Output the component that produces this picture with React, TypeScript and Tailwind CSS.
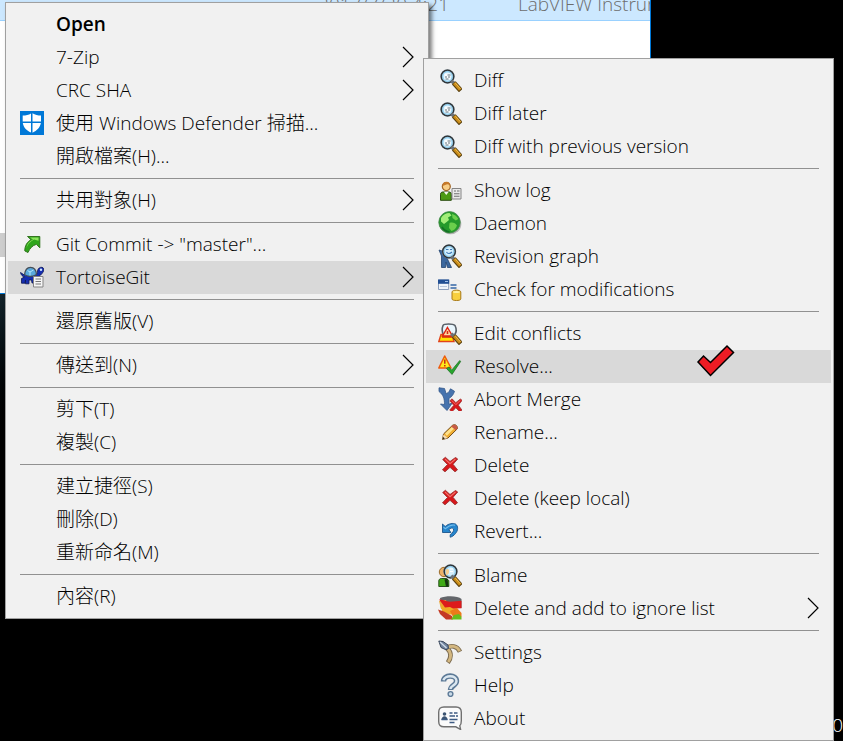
import React from "react"

interface MenuEntry {
  label: string
  icon?: React.ReactNode
  bold?: boolean
  active?: boolean
  submenu?: boolean
  marked?: boolean
}

const Icon = ({ children }: { children?: React.ReactNode }) => (
  <svg viewBox="0 0 24 24" className="size-6" aria-hidden="true">
    {children}
  </svg>
)

const Handle = () => (
  <>
    <path d="M13.2 12.8l3.3 2.8" stroke="#6c7278" strokeWidth="3.4" />
    <path d="M15.8 14.8l7 7.8" stroke="#59400f" strokeWidth="5" />
    <path d="M16.2 15l6 6.8" stroke="#c98b18" strokeWidth="3.2" />
    <path d="M17.4 15.2l5 5.6" stroke="#eebc50" strokeWidth="1" />
  </>
)

const Lens = ({ cx = 9.5, cy = 8.5 }: { cx?: number; cy?: number }) => (
  <>
    <circle cx={cx} cy={cy} r="6" fill="#d5effc" stroke="#8b969e" strokeWidth="2.4" />
    <circle cx={cx} cy={cy} r="6.3" fill="none" stroke="#2d3438" strokeWidth="1.3" />
    <circle cx={cx} cy={cy} r="4.8" fill="none" stroke="#8fd0f2" strokeWidth="1.2" />
  </>
)

const DiffIcon = () => (
  <Icon>
    <Lens />
    <rect x="6.5" y="5.5" width="6" height="6" fill="#fbfdfe" />
    <path d="M9.5 7h3M7 9h2M10 9h2M7.5 11h3" stroke="#62727c" strokeWidth="1" />
    <Handle />
  </Icon>
)

const DefenderIcon = () => (
  <Icon>
    <rect width="24" height="24" fill="#0078d7" />
    <path
      d="M11 2.5C8.7 4 6 4.6 2.7 4.6v5.9H11zM12.5 2.3c2.5 1.7 5.500 2.300 8.500 2.300v5.900h-8.500zM2.8 12H11v9.600C6.500 19.500 3.500 16.500 2.800 12zM12.500 12h8.400c-.8 4.500-3.900 7.500-8.400 9.700z"
      fill="#fff"
    />
  </Icon>
)

const CommitIcon = () => (
  <Icon>
    <path
      d="M7.500 4.500h12.300v11.300l-3.400-3.500c-4 1.200-6.600 4-8.400 8.200l-3.200-1.600C4.700 13.500 7.500 9.500 11 7.700z"
      fill="#2fa51c"
      stroke="#33751f"
    />
    <path d="M10 5.500h8.500v3.300L14 7.500c-4 2-6.500 5-7.500 8.500.3-4 2.800-7 6.500-8.600z" fill="#8de35c" />
  </Icon>
)

const TortoiseIcon = () => (
  <Icon>
    <path
      d="M.5 7.500L4 9.800l3-.6 8 .8c2-.5 2.500-2 2.500-4C18 3.200 20 2 22 2.300c1.800.4 2.200 2.500 1.500 4C22 9.300 19.500 11 17 13l-.5 5H12l-.5-3H9v3.800H5.500V15L5 18.200H1.500V13.500L4.500 12C2.500 11.500 1 10 .5 7.500z"
      fill="#152db0"
      stroke="#0c1656"
      strokeWidth=".8"
    />
    <path
      d="M4.500 9.800C5 5 7.500 2.300 10.500 2.300c3.700 0 5.700 3 6 7.200-3.500 2.300-8.500 2.300-12 .3z"
      fill="#5aa9dc"
      stroke="#464e58"
      strokeWidth="1.300"
    />
    <path d="M7.500 5.500L10 7l3.500-2M10 7v3.500" stroke="#b5e5fa" fill="none" />
    <circle cx="21" cy="4.700" r="1.200" fill="#cfe6ff" />
    <path d="M13.500 11.500H23V22h-9.500z" fill="#f6f6f6" stroke="#858585" />
    <path d="M15.500 14h5.500M15.500 16.500h5.500M15.500 19h5.500" stroke="#777" strokeWidth="1.200" />
  </Icon>
)

const LogIcon = () => (
  <Icon>
    <path d="M2.500 22.300v-6c0-1.500 1-2.300 2.500-2.300h6c1.500 0 2.300.8 2.300 2.300v6z" fill="#4c9a14" stroke="#2a4c10" />
    <path d="M6 14l2.300 3 2.300-3z" fill="#f5f8f0" />
    <circle cx="8.300" cy="8.600" r="4" fill="#f8cf88" stroke="#a06424" strokeWidth="1.200" />
    <path d="M4.500 8c0-3 2-4.500 4.300-4.300 2 .1 3.300 1.500 3.400 3.300-2-1.200-3.500-1-5 0z" fill="#c67a2b" />
    <path d="M14 10.500h9V21h-9z" fill="#e9e9e9" stroke="#858585" />
    <path d="M16 13h2M19 13h2.500M16 15.700h5.500M16 18.300h5.500" stroke="#707070" strokeWidth="1.100" />
  </Icon>
)

const GlobeIcon = () => (
  <Icon>
    <ellipse cx="12.500" cy="13" rx="10.800" ry="10.300" fill="#000" opacity=".25" />
    <circle cx="11.500" cy="11.300" r="10.700" fill="#259a2b" stroke="#45884a" strokeWidth=".8" />
    <path d="M3 7c2-3.500 5-5 8.500-5l2 2.500-3.500 2 1 2.500-3 2.500L6 13 3 10.500z" fill="#a3ed79" />
    <path d="M14 3c3 .5 5 2.500 6.300 5l-2.500 1.500L14.500 7zM11.500 12c3-1 6 0 7.500 2.500-1 3-3 5-5.500 5.500L11 17z" fill="#6bcf4c" />
    <path d="M4 16c2 3.500 5 4.500 7.500 5" stroke="#147126" strokeWidth="1.600" fill="none" />
  </Icon>
)

const GraphIcon = () => (
  <Icon>
    <path d="M1 6l5 1.500L9 14l4.500 9.500h-4L8 18l-.5 5.500H3.500V12z" fill="#3c689e" stroke="#23446f" strokeWidth=".8" />
    <Lens cx={11} cy={7.5} />
    <path d="M8 5.500h2.500M12 5.500h2M8.500 8c1 2 3.500 2 5.500 0" stroke="#3e78b5" strokeWidth="1.100" fill="none" />
    <Handle />
  </Icon>
)

const CheckModsIcon = () => (
  <Icon>
    <path d="M.5 3h10.200v9.500H.5z" fill="#eff4fa" stroke="#8a9dbb" />
    <path d="M0 2.500h11.200v4.300H0z" fill="#214f94" />
    <path d="M7 4.500h3" stroke="#9dbfea" />
    <path d="M2 9.500h7" stroke="#b9c8dd" />
    <path d="M12.500 8h6M12.500 11h6" stroke="#3667a6" strokeWidth="1.300" />
    <path d="M14 15c0-2.500 8.800-2.500 8.800 0v7c0 2-8.800 2-8.800 0z" fill="#f8cf3e" stroke="#a87919" />
    <ellipse cx="18.400" cy="15" rx="3.500" ry="1" fill="#fff0a0" />
  </Icon>
)

const EditConflictsIcon = () => (
  <Icon>
    <path
      d="M5 4.500C6 2.500 15 2.500 17 4.500c1.500 3 1.500 7-.5 9.500h-11C4 11 4 7 5 4.500z"
      fill="#e8f5fc"
      stroke="#596068"
      strokeWidth="1.600"
    />
    <path d="M3 13.500h11l2 7H.8z" fill="#ffe100" stroke="#e24318" strokeWidth="1.400" />
    <path d="M9.500 6.500l5 8.500h-10z" fill="#ffd9a0" stroke="#e02313" strokeWidth="1.400" />
    <path d="M4 16h10M9.500 10v3" stroke="#d62514" strokeWidth="1.600" />
    <Handle />
  </Icon>
)

const ResolveIcon = () => (
  <Icon>
    <path d="M6.700 2L13 14H.8z" fill="#ffea1c" stroke="#ee5a0c" strokeWidth="1.500" strokeLinejoin="round" />
    <path d="M6.800 5.500v4.200M6.800 11v1.500" stroke="#c22818" strokeWidth="1.500" />
    <path d="M8.500 14.500l2.500-1.500 2.700 3.200 8-9.600 1 .8-8.700 13z" fill="#27a82c" stroke="#26712b" strokeWidth=".8" />
  </Icon>
)

const CrossShape = () => (
  <>
    <path
      d="M4.700 6.500l2.700-2.200 4.600 4.200 5.500-4 2.200 1.500-4.700 5.300 4.500 5.500-2.500 2-5-4.500-5 4.500-2.500-2 5-5.300z"
      fill="#d7171b"
      stroke="#9a3533"
      strokeWidth=".9"
    />
    <path d="M7 6l5 4.700L17.500 6" stroke="#f47168" strokeWidth="1.100" fill="none" />
  </>
)

const AbortIcon = () => (
  <Icon>
    <path
      d="M1 .8l5.500.7 1.700 5.300c3-1.300 3-2.800 4.300-5l4 2.500c-1 3-2.500 5.500-5.500 7v6l3.500-1.500L9 23.500 2.500 17l4 .5c0-6-1-9.500-5.500-13z"
      fill="#4673ae"
      stroke="#34588a"
      strokeWidth=".8"
    />
    <g transform="translate(8 8) scale(.82 .9)">
      <CrossShape />
    </g>
  </Icon>
)

const RenameIcon = () => (
  <Icon>
    <path d="M4.500 19.500l1-5.500 9-8.700c2.500-1.800 5.500.5 4.800 3.500L10 18z" fill="#f0ae32" stroke="#754c18" />
    <path d="M7 13.500l7.500-7 1.800 1.700-7.500 7.500z" fill="#ffe28c" />
    <path d="M14.500 5.300c2.500-1.800 5.500.5 4.800 3.500l-1.500 1.400-4.700-3.600z" fill="#c85b46" />
    <path d="M4.500 19.500l1-5 4.300 3.500z" fill="#f6dcb2" />
    <path d="M4.500 19.500l.6-2.500 1.800 1.500z" fill="#222" />
  </Icon>
)

const DeleteIcon = () => (
  <Icon>
    <CrossShape />
  </Icon>
)

const RevertIcon = () => (
  <Icon>
    <path
      d="M4.500 5l2.700 2.500C11 4.200 15 4 17.500 5c3 2 2.700 6.500 0 9.500-1.500 2-3.500 3.300-5.300 3.700v-2.500c2.500-1.500 3.800-4 3.300-5.700-.8-1.500-3-1-4.700.7l2.200 2.800H4.500z"
      fill="#2686cd"
      stroke="#1c568d"
      strokeWidth=".9"
    />
    <path d="M5.500 8.300l2 1.400C11 6.500 14 5.500 17 6.300" stroke="#75bdec" strokeWidth="1.100" fill="none" />
  </Icon>
)

const BlameIcon = () => (
  <Icon>
    <path d="M.8 23.500V18c0-1.500 1-2.500 2.500-2.500h5l2.500 2v6z" fill="#3fab16" stroke="#28521a" />
    <path d="M6.500 16.500l3-1 1 8H8z" fill="#163512" />
    <circle cx="6" cy="9" r="4.700" fill="#eeb268" stroke="#9b6c2c" />
    <Lens cx={12.5} cy={8.5} />
    <path d="M7.500 7c3-2.500 4.500 0 3 4l-2.500 1.500z" fill="#f7cf90" />
    <path d="M12 6h3M12 8.500h3" stroke="#fff" />
    <Handle />
  </Icon>
)

const IgnoreIcon = () => (
  <Icon>
    <path d="M2 2C8-.5 20-.5 23.500 3v9H3z" fill="#63666a" />
    <path d="M1 5l7-1 3 11-8-2z" fill="#e9a838" />
    <path d="M3.500 8.500H20L18 18c-4 1.500-10 0-14-2z" fill="#efaa25" />
    <path d="M1 3.500C5 3.500 8 5.500 12 5.800l11.500-1v7.400l-8.500.3-3-1.500-5 .5L4.500 8z" fill="#dc1a1c" />
    <path d="M0 13.500l6 2 8 4.500 1 3.500H8L2 18z" fill="#c43a24" />
    <path d="M12 15l7-3 4.500 5v4H15z" fill="#ec7a1a" />
    <path d="M13 23.500l3-4.500 5-1 2.500 3v2.500z" fill="#68bd1c" />
  </Icon>
)

const SettingsIcon = () => (
  <Icon>
    <path
      d="M8 8c5-2.800 11-2.500 14 3.700M9 8c4.500 4.500 4.500 9.500.8 14.700"
      fill="none"
      stroke="#7d6c50"
      strokeWidth="4.600"
      strokeLinejoin="round"
    />
    <path d="M8 8c5-2.800 11-2.500 13.700 3.200M9 8c4.500 4.500 4.500 9.500 1.200 14" fill="none" stroke="#d3b780" strokeWidth="2.800" />
    <path d="M.8 1l4.200.5L10 5l.5 3.500L8 9.800 3 7.500z" fill="#71849e" stroke="#3a475b" />
    <path d="M2 2l6.500 6" stroke="#cfdcea" strokeWidth="1.300" />
  </Icon>
)

const HelpIcon = () => (
  <Icon>
    <path d="M5.500 8.500C5.500 1.500 18.500 1 18.500 8c0 4.500-6 4.500-6 9" fill="none" stroke="#5d7a97" strokeWidth="5.400" />
    <path d="M5.500 7.300C6.500 2 18.500 1.500 18.500 8c0 4.500-6 4.500-6 8" fill="none" stroke="#dbe7f0" strokeWidth="2.400" />
    <circle cx="12.500" cy="21" r="2.400" fill="#c9dae7" stroke="#5d7a97" strokeWidth="1.400" />
  </Icon>
)

const AboutIcon = () => (
  <Icon>
    <path
      d="M6 1h12c4 0 5.300 1.500 5.300 5.300v8.500c0 3-.6 4.200-1.500 5l.8 3.700-4.800-2.700H6C2.200 20.800.7 19 .7 15.500V6.300C.7 2.500 2.200 1 6 1z"
      fill="#fbfbfb"
      stroke="#707070"
      strokeWidth="1.400"
    />
    <circle cx="6.500" cy="8" r="1.800" fill="#3c5472" />
    <path d="M3.500 14c0-5 6-5 6 0z" fill="#3c5472" />
    <path
      d="M11.500 7h3M16 7h3.500M11.500 10h5.500M18 10h2M3.500 13.500h6M11.500 13.500h8M11.500 16.500h5"
      stroke="#3e5b83"
      strokeWidth="1.400"
    />
  </Icon>
)

// null is a separator
const explorerEntries: (MenuEntry | null)[] = [
  { label: "Open", bold: true },
  { label: "7-Zip", submenu: true },
  { label: "CRC SHA", submenu: true },
  { label: "使用 Windows Defender 掃描...", icon: <DefenderIcon /> },
  { label: "開啟檔案(H)..." },
  null,
  { label: "共用對象(H)", submenu: true },
  null,
  { label: 'Git Commit -> "master"...', icon: <CommitIcon /> },
  { label: "TortoiseGit", icon: <TortoiseIcon />, active: true, submenu: true },
  null,
  { label: "還原舊版(V)" },
  null,
  { label: "傳送到(N)", submenu: true },
  null,
  { label: "剪下(T)" },
  { label: "複製(C)" },
  null,
  { label: "建立捷徑(S)" },
  { label: "刪除(D)" },
  { label: "重新命名(M)" },
  null,
  { label: "內容(R)" },
]

const tortoiseEntries: (MenuEntry | null)[] = [
  { label: "Diff", icon: <DiffIcon /> },
  { label: "Diff later", icon: <DiffIcon /> },
  { label: "Diff with previous version", icon: <DiffIcon /> },
  null,
  { label: "Show log", icon: <LogIcon /> },
  { label: "Daemon", icon: <GlobeIcon /> },
  { label: "Revision graph", icon: <GraphIcon /> },
  { label: "Check for modifications", icon: <CheckModsIcon /> },
  null,
  { label: "Edit conflicts", icon: <EditConflictsIcon /> },
  { label: "Resolve...", icon: <ResolveIcon />, active: true, marked: true },
  { label: "Abort Merge", icon: <AbortIcon /> },
  { label: "Rename...", icon: <RenameIcon /> },
  { label: "Delete", icon: <DeleteIcon /> },
  { label: "Delete (keep local)", icon: <DeleteIcon /> },
  { label: "Revert...", icon: <RevertIcon /> },
  null,
  { label: "Blame", icon: <BlameIcon /> },
  { label: "Delete and add to ignore list", icon: <IgnoreIcon />, submenu: true },
  null,
  { label: "Settings", icon: <SettingsIcon /> },
  { label: "Help", icon: <HelpIcon /> },
  { label: "About", icon: <AboutIcon /> },
]

const RedCheck = () => (
  <svg viewBox="0 0 40 34" className="absolute -top-1.5 left-[270px] h-[34px] w-10" aria-hidden="true">
    <path d="M2 18l5.500-6 7 6.500L31 2l6.500 6.500-23 23z" fill="#ed1c24" stroke="#000" strokeWidth="1.500" />
  </svg>
)

const ContextMenu = ({ entries, label }: { entries: (MenuEntry | null)[]; label: string }) => (
  <div role="menu" aria-label={label} className="border border-[#a0a0a0] bg-[#f1f1f1] px-0.5 py-[5px]">
    {entries.map((entry, index) =>
      entry ? (
        <button
          key={index}
          type="button"
          role="menuitem"
          aria-haspopup={entry.submenu ? "menu" : undefined}
          className={`relative flex h-[33px] w-full items-center gap-3 px-3 pb-px text-left whitespace-nowrap ${
            entry.active ? "bg-[#d9d9d9]" : ""
          } ${entry.bold ? "font-semibold" : "font-light"}`}
        >
          <span className="size-6 shrink-0">{entry.icon}</span>
          <span className="grow">{entry.label}</span>
          {entry.submenu && (
            <svg viewBox="0 0 12 22" className="h-[22px] w-3 shrink-0" aria-hidden="true">
              <path d="M1 1l10 10L1 21" fill="none" stroke="#000" strokeWidth="1.200" />
            </svg>
          )}
          {entry.marked && <RedCheck />}
        </button>
      ) : (
        <div key={index} role="separator" className="px-3 py-[5px]">
          <div className="h-px bg-[#919191]" />
        </div>
      ),
    )}
  </div>
)

export default function App() {
  return (
    <main className="relative h-screen min-h-[741px] overflow-hidden bg-black font-['Open_Sans','Noto_Sans_CJK_TC',sans-serif] text-[19px] leading-6 text-black">
      {/* Explorer window behind the menus */}
      <div className="absolute top-0 left-0 h-[294px] w-[651px] overflow-hidden border-r border-b border-[#0078d7] bg-white">
        <div className="flex h-[21px] items-end gap-[69px] border-b border-[#99d1ff] bg-[#cce8ff] pb-1 pl-[309px] font-light whitespace-nowrap text-[#6d6d6d]">
          <span className="w-[140px] shrink-0 text-right">2017/7/20 4:21</span>
          <span>LabVIEW Instrument</span>
        </div>
        <div className="mt-[212px] h-6 w-4 bg-[#cdcdcd]" />
      </div>
      <div className="absolute top-[294px] left-0 h-40 w-[5px] bg-linear-to-b from-[#14242b] to-black" />
      <div className="absolute right-0 bottom-1 font-light text-white">20</div>

      <div className="absolute top-0.5 left-[5px] w-[424px] shadow-[3px_3px_4px_rgba(0,0,0,0.5)]">
        <ContextMenu entries={explorerEntries} label="Explorer" />
      </div>
      <div className="absolute top-[58px] left-[423px] w-[411px]">
        <ContextMenu entries={tortoiseEntries} label="TortoiseGit" />
      </div>
    </main>
  )
}
